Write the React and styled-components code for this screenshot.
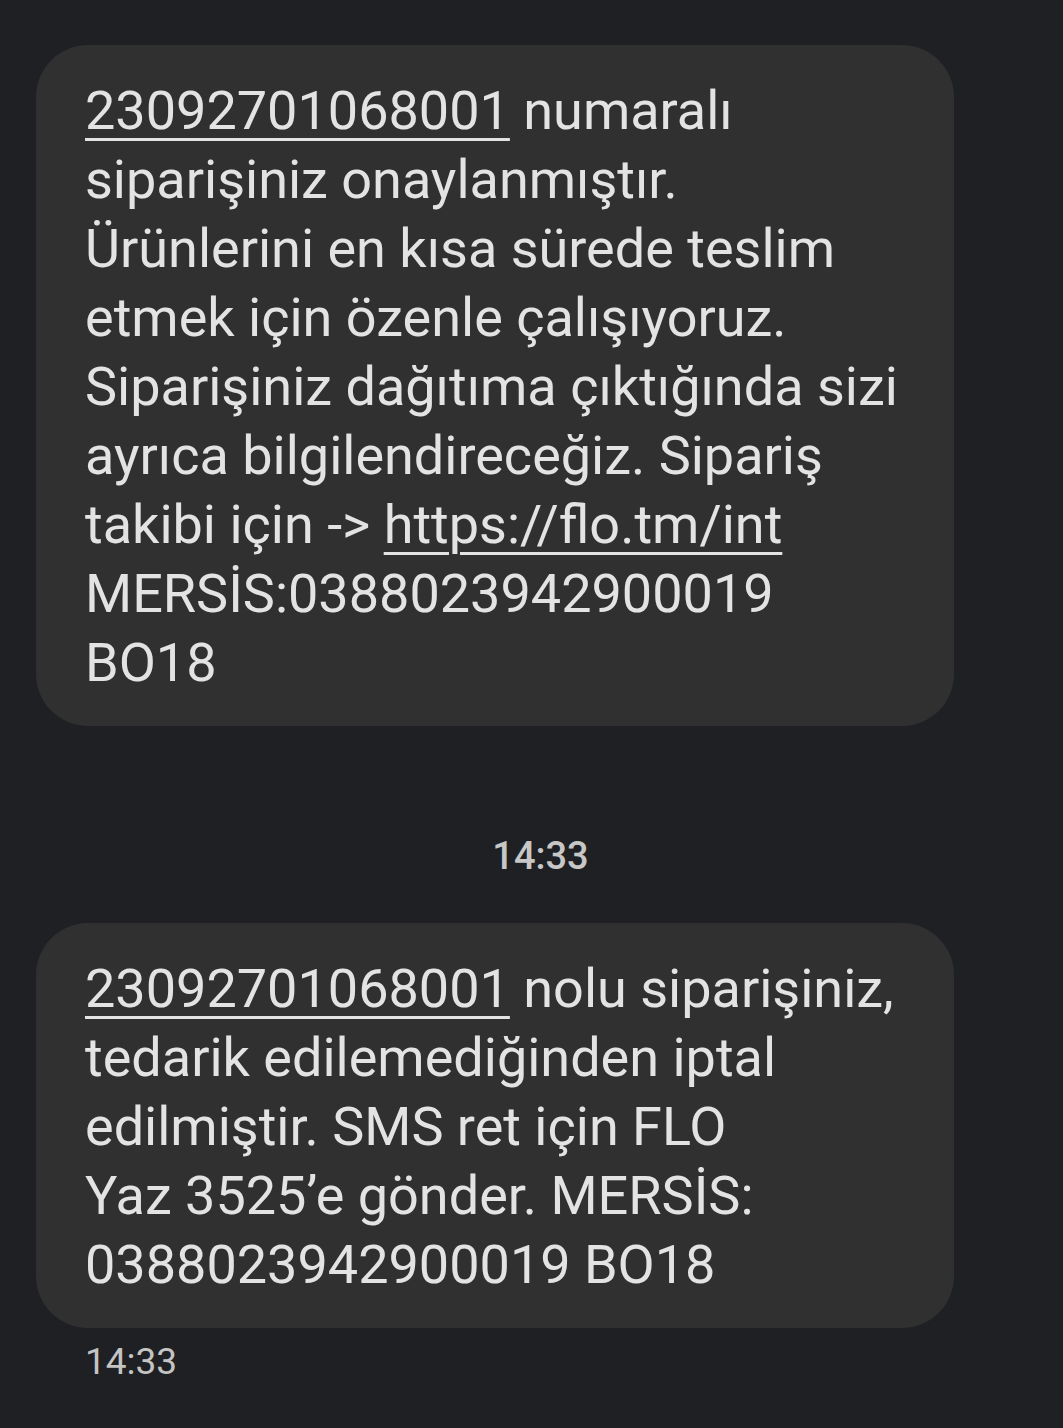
import React from "react";
import styled, { createGlobalStyle } from "styled-components";

const GlobalStyle = createGlobalStyle`
  html, body {
    margin: 0;
    padding: 0;
    background: #1f2023;
  }
  body {
    font-family: Roboto, "Noto Sans", sans-serif;
    color: #e3e3e3;
  }
`;

const Thread = styled.div`
  display: flex;
  flex-direction: column;
  padding: 45px 0 40px 36px;
  min-height: 1428px;
  box-sizing: border-box;
`;

const Bubble = styled.div`
  width: 918px;
  box-sizing: border-box;
  background: #303030;
  border-radius: 52px;
  padding: 31px 40px 29px 49px;
  font-size: 54px;
  line-height: 69px;
  letter-spacing: 0;
  color: #e3e3e3;
`;

const Link = styled.span`
  text-decoration: underline;
  text-decoration-thickness: 3px;
  text-underline-offset: 9px;
`;

const DayStamp = styled.div`
  margin: 110px 0 47px -18px;
  text-align: center;
  font-size: 38px;
  font-weight: 500;
  color: #c7c7c7;
  line-height: 40px;
`;

const Time = styled.div`
  margin: 14px 0 0 49px;
  font-size: 37px;
  line-height: 40px;
  color: #c4c4c4;
`;

const App = () => {
  return (
    <>
      <GlobalStyle />
      <Thread>
        <Bubble>
          <Link>23092701068001</Link> numaralı
          <br />
          siparişiniz onaylanmıştır.
          <br />
          Ürünlerini en kısa sürede teslim
          <br />
          etmek için özenle çalışıyoruz.
          <br />
          Siparişiniz dağıtıma çıktığında sizi
          <br />
          ayrıca bilgilendireceğiz. Sipariş
          <br />
          takibi için -&gt; <Link>https://flo.tm/int</Link>
          <br />
          MERSİS:0388023942900019
          <br />
          BO18
        </Bubble>
        <DayStamp>14:33</DayStamp>
        <Bubble>
          <Link>23092701068001</Link> nolu siparişiniz,
          <br />
          tedarik edilemediğinden iptal
          <br />
          edilmiştir. SMS ret için FLO
          <br />
          Yaz 3525’e gönder. MERSİS:
          <br />
          0388023942900019 BO18
        </Bubble>
        <Time>14:33</Time>
      </Thread>
    </>
  );
};

export default App;
